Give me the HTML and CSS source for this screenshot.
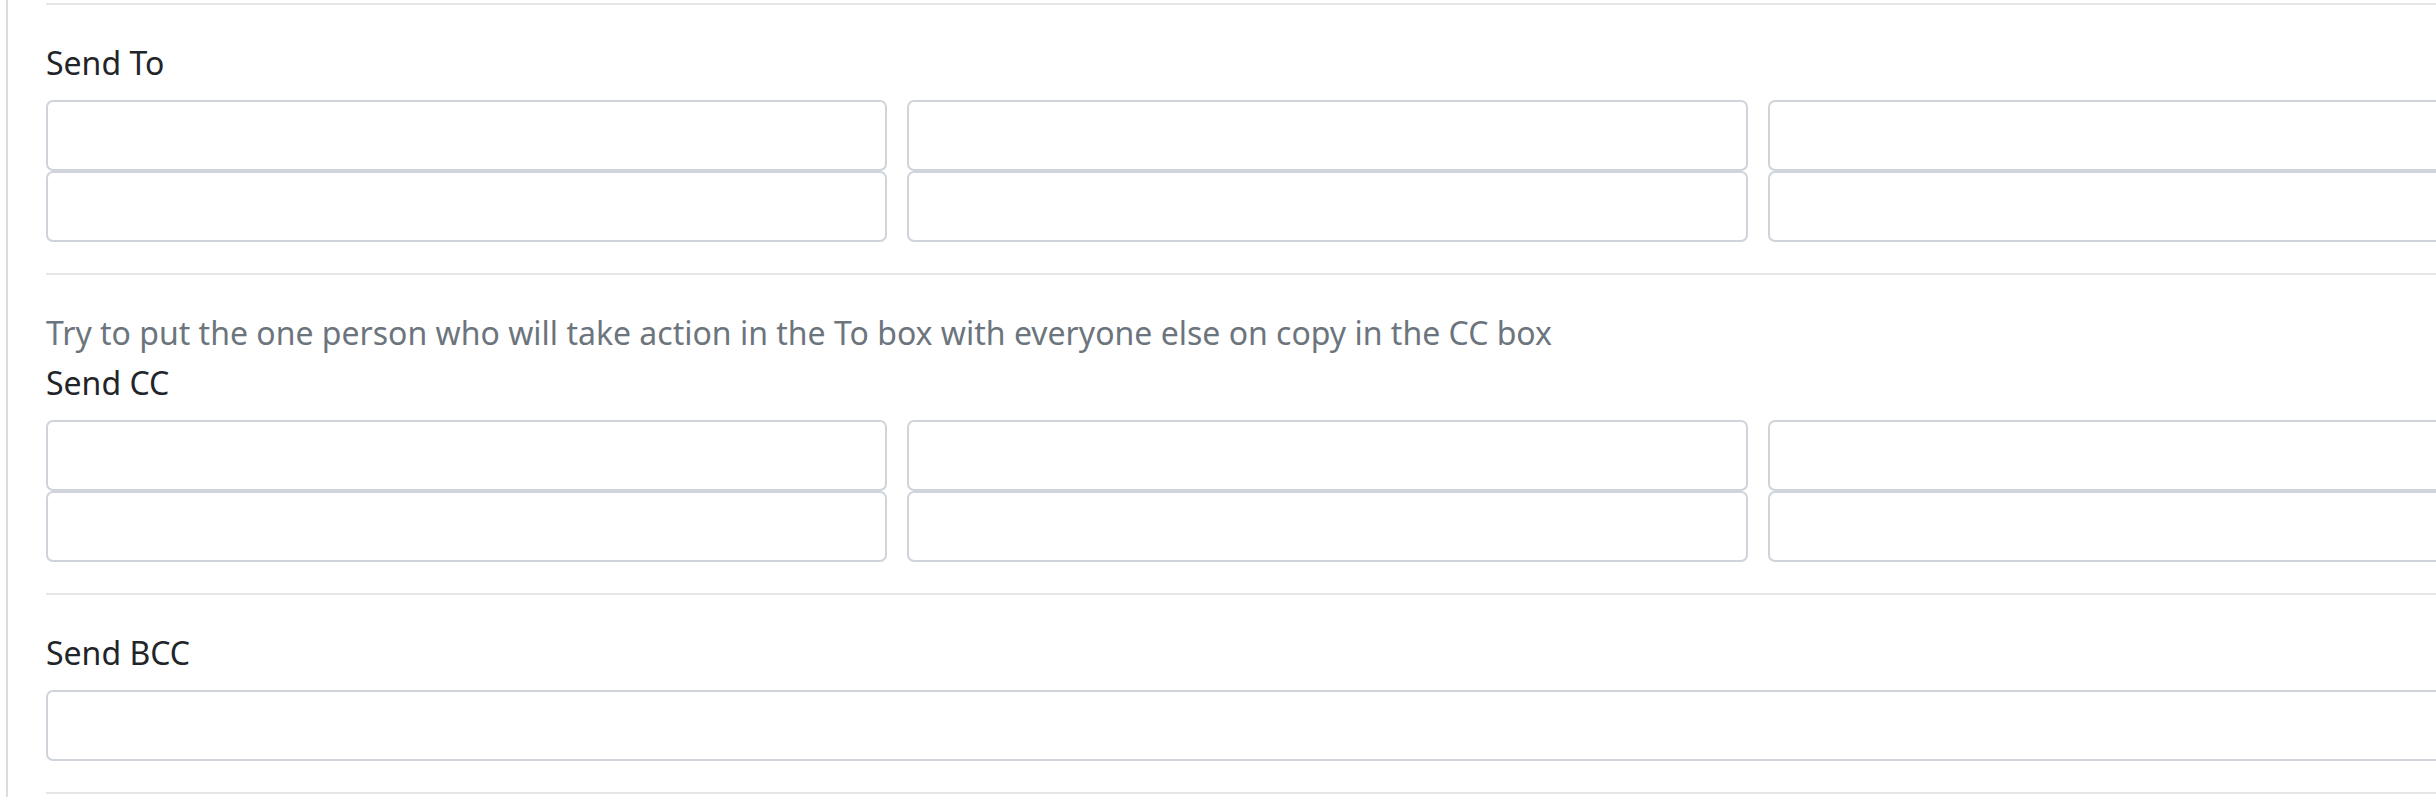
FILE: index.html
```html
<!DOCTYPE html>
<html lang="en">
<head>
<meta charset="utf-8">
<title>Send options</title>
<link rel="stylesheet" href="styles.css">
</head>
<body>
<div class="panel">
  <section class="group">
    <label class="label">Send To</label>
    <div class="grid3">
      <input class="field" type="text">
      <input class="field" type="text">
      <input class="field" type="text">
      <input class="field" type="text">
      <input class="field" type="text">
      <input class="field" type="text">
    </div>
  </section>
  <section class="group">
    <p class="hint">Try to put the one person who will take action in the To box with everyone else on copy in the CC box</p>
    <label class="label">Send CC</label>
    <div class="grid3">
      <input class="field" type="text">
      <input class="field" type="text">
      <input class="field" type="text">
      <input class="field" type="text">
      <input class="field" type="text">
      <input class="field" type="text">
    </div>
  </section>
  <section class="group">
    <label class="label">Send BCC</label>
    <input class="field field-wide" type="text">
  </section>
  <div class="rule"></div>
</div>
</body>
</html>
```
FILE: styles.css
```css
html, body {
  margin: 0;
  padding: 0;
  background: #ffffff;
  overflow: hidden;
}
body {
  font-family: "Segoe UI", "Noto Sans", "Open Sans", sans-serif;
  font-size: 32px;
  line-height: 50px;
  color: #212529;
}
.panel {
  margin-left: 6px;
  border-left: 2px solid #dcdcdc;
  padding: 3px 0 0 38px;
  width: 2563px;
  min-height: 797px;
}
.group {
  border-top: 2px solid #e6e6e6;
  padding: 33px 0 31px;
}
.label {
  display: block;
  margin-bottom: 12px;
}
.hint {
  margin: 0;
  color: #6c757d;
}
.grid3 {
  display: grid;
  grid-template-columns: repeat(3, 841px);
  column-gap: 20px;
}
.field {
  display: block;
  box-sizing: border-box;
  height: 71px;
  margin: 0;
  padding: 0 18px;
  border: 2px solid #ced4da;
  border-radius: 7px;
  background: #ffffff;
  font: inherit;
}
.field-wide {
  width: 100%;
}
.rule {
  border-top: 2px solid #e6e6e6;
}
```
